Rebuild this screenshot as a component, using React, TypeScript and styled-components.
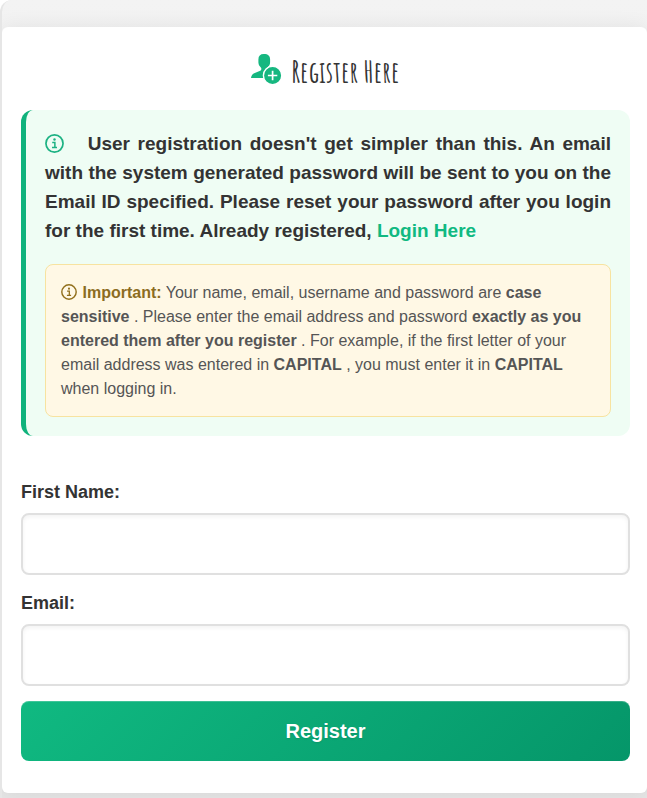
import React from "react";
import styled, { createGlobalStyle } from "styled-components";

const GlobalStyle = createGlobalStyle`
  *, *::before, *::after { box-sizing: border-box; }
  body {
    margin: 0;
    background: #fff;
    color: #333;
    font-family: "Liberation Sans", Arial, sans-serif;
  }
`;

const Page = styled.main`
  min-height: 100vh;
  padding: 27px 0 5px;
  border-left: 2px solid #e6e6e6;
  border-top-left-radius: 12px;
  background: linear-gradient(#f3f3f3, #e5e5e5);
  overflow: hidden;
`;

const Card = styled.section`
  padding: 24px 17px 32px 19px;
  border-radius: 6px;
  background: #fff;
  box-shadow: 0 0 20px rgba(0, 0, 0, 0.07);
`;

const Title = styled.h1`
  display: flex;
  align-items: center;
  justify-content: center;
  gap: 9px;
  height: 40px;
  margin: 0 0 19px;
  font-family: "Amatic SC", "Liberation Sans", cursive;
  font-size: 30px;
  font-weight: 700;
  white-space: nowrap;

  svg {
    margin-bottom: 4px;
  }
`;

const Info = styled.div`
  padding: 19px;
  border-left: 5px solid #10b27c;
  border-radius: 12px;
  background: #effdf4;
`;

const Lead = styled.p`
  margin: 0 0 19px;
  font-size: 19px;
  font-weight: 700;
  line-height: 29px;
  text-align: justify;

  svg {
    margin-right: 16px;
    color: #1db283;
    vertical-align: -3px;
  }
`;

const LoginLink = styled.a`
  color: #10b981;
  text-decoration: none;
`;

const Notice = styled.p`
  margin: 0;
  padding: 16px 15px 15px;
  border: 1px solid #f7e3a0;
  border-radius: 8px;
  background: #fff8e5;
  color: #555;
  font-size: 16px;
  line-height: 24px;

  svg {
    margin-right: 1px;
    color: #92701c;
    vertical-align: -2px;
  }
`;

const Important = styled.strong`
  color: #8c6d1f;
`;

const Form = styled.form`
  display: flex;
  flex-direction: column;
  margin-top: 43px;
`;

const Label = styled.label`
  margin-bottom: 8px;
  font-size: 18px;
  font-weight: 700;
  line-height: 26px;
`;

const Input = styled.input`
  width: 100%;
  height: 62px;
  margin-bottom: 15px;
  padding: 0 16px;
  border: 2px solid #e0e0e0;
  border-radius: 8px;
  background: #fff;
  box-shadow: inset 0 2px 4px rgba(0, 0, 0, 0.05);
  color: #333;
  font: inherit;
`;

const Button = styled.button`
  height: 60px;
  border: 0;
  border-radius: 8px;
  background: linear-gradient(135deg, #10b981, #059669);
  box-shadow: inset 0 1px 0 rgba(255, 255, 255, 0.2);
  color: #fff;
  font-family: inherit;
  font-size: 20px;
  font-weight: 700;
  text-shadow: 0 1px 2px rgba(0, 0, 0, 0.1);
`;

function PersonAddIcon() {
  return (
    <svg width="31" height="31" viewBox="0 0 31 31" aria-hidden="true">
      <path
        fill="#16b780"
        d="M12.8 0C9.2 0 7.4 1.9 7.4 5.4V8.6C7.4 11.2 9 12.6 10.2 14.1C10.6 15.6 10 16.5 8.6 17.1L3.2 19.2C1.2 20 .3 22 0 24H13C12.4 18.5 14.3 14.8 17.2 12.7C18.5 11.4 19.1 10 19.1 8.2V5.4C19.1 1.9 17.2 0 12.8 0Z"
      />
      <circle cx="21.6" cy="21.5" r="9.2" fill="#16b780" stroke="#fff" strokeWidth="1.4" />
      <path d="M21.6 16.8v9.4M16.9 21.5h9.4" stroke="#fff" strokeWidth="1.7" />
    </svg>
  );
}

function InfoIcon({ size }: { size: number }) {
  return (
    <svg width={size} height={size} viewBox="0 0 20 20" fill="none" stroke="currentColor" aria-hidden="true">
      <circle cx="10" cy="10" r="9" strokeWidth="1.8" />
      <path d="M7.6 8.9h2.8v5M7.4 14.2h5.2" strokeWidth="1.6" />
      <circle cx="10" cy="5.8" r="1.3" fill="currentColor" stroke="none" />
    </svg>
  );
}

export default function App() {
  return (
    <>
      <GlobalStyle />
      <Page>
        <Card>
          <Title>
            <PersonAddIcon />
            Register Here
          </Title>
          <Info>
            <Lead>
              <InfoIcon size={19} /> User registration doesn't get simpler than this. An email with the system
              generated password will be sent to you on the Email ID specified. Please reset your password after you
              login for the first time. Already registered, <LoginLink href="#login">Login Here</LoginLink>
            </Lead>
            <Notice>
              <InfoIcon size={16} /> <Important>Important:</Important> Your name, email, username and password are{" "}
              <strong>case sensitive</strong> . Please enter the email address and password{" "}
              <strong>exactly as you entered them after you register</strong> . For example, if the first letter of
              your email address was entered in <strong>CAPITAL</strong> , you must enter it in{" "}
              <strong>CAPITAL</strong> when logging in.
            </Notice>
          </Info>
          <Form>
            <Label htmlFor="first-name">First Name:</Label>
            <Input id="first-name" type="text" />
            <Label htmlFor="email">Email:</Label>
            <Input id="email" type="email" />
            <Button type="button">Register</Button>
          </Form>
        </Card>
      </Page>
    </>
  );
}
